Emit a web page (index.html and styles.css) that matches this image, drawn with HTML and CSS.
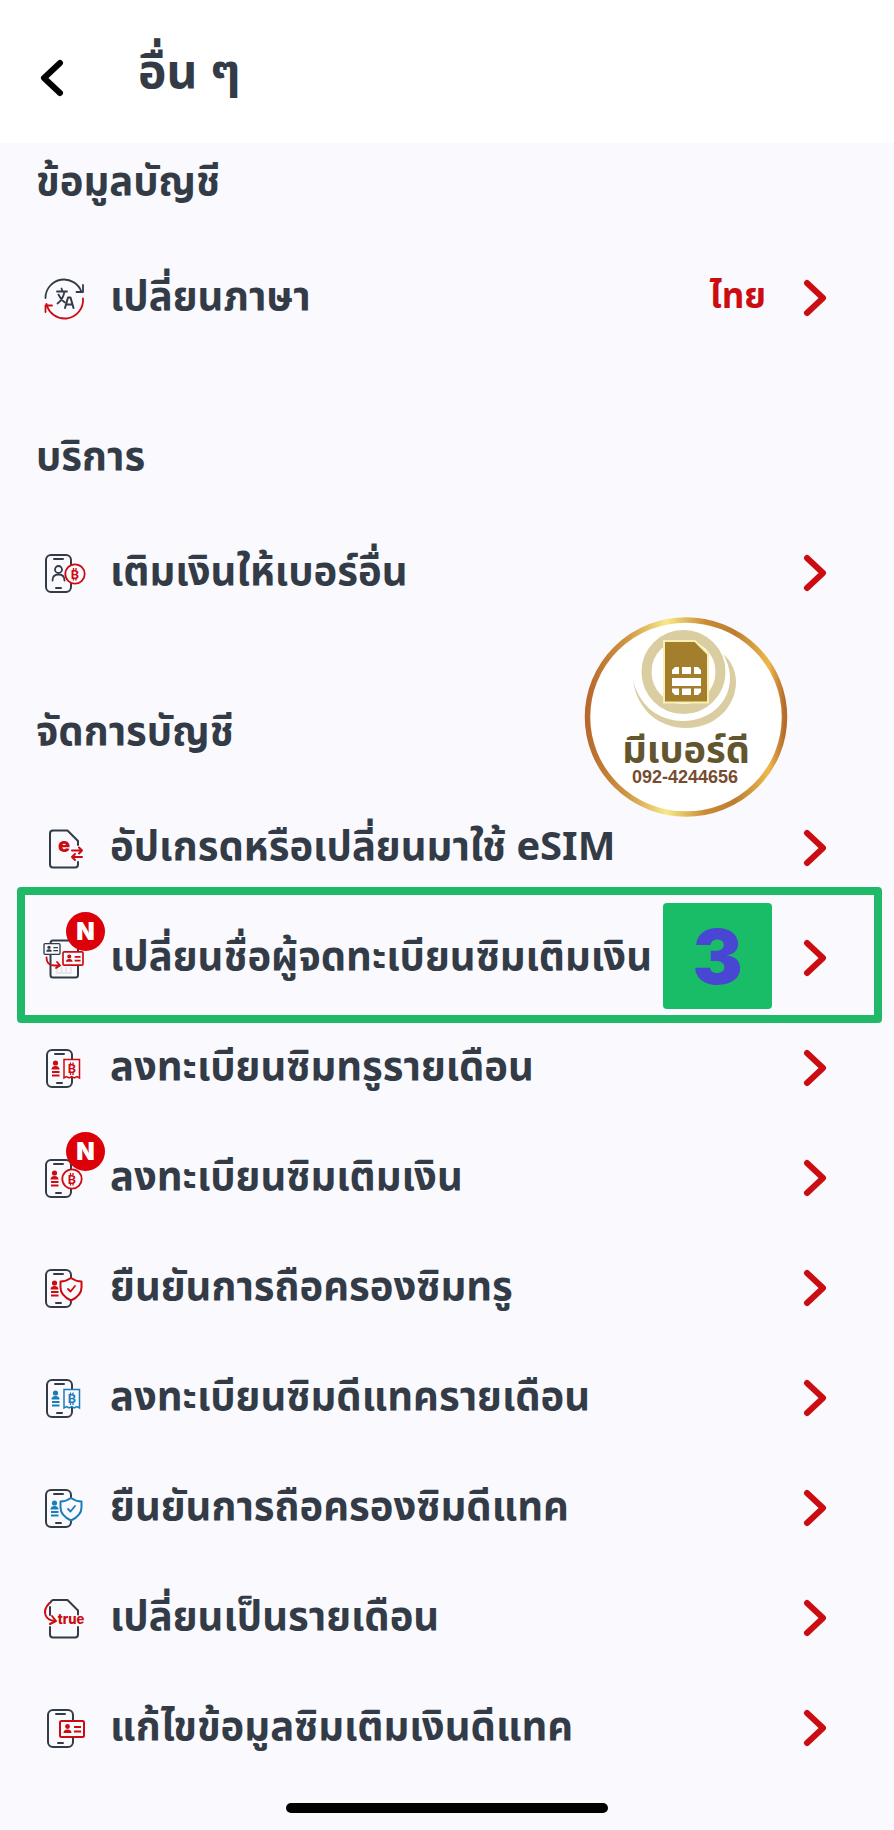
FILE: index.html
```html
<!DOCTYPE html>
<html lang="th">
<head>
<meta charset="utf-8">
<meta name="viewport" content="width=device-width, initial-scale=1">
<title>อื่น ๆ</title>
<link rel="stylesheet" href="styles.css">
</head>
<body>
<svg class="defs" aria-hidden="true">
  <symbol id="chevron" viewBox="0 0 24 38"><path d="M4 4L20 19L4 34" fill="none" stroke="currentColor" stroke-width="6" stroke-linecap="round" stroke-linejoin="round"/></symbol>
  <symbol id="phone" viewBox="0 0 48 48">
    <rect x="6" y="6" width="25" height="37" rx="5" fill="none" stroke="#333c46" stroke-width="2"/>
    <path d="M14 10h9M16 39h5" stroke="#333c46" stroke-width="2" stroke-linecap="round"/>
  </symbol>
  <symbol id="person" viewBox="0 0 48 48">
    <circle cx="14.500" cy="19" r="2.600" fill="currentColor"/>
    <path d="M10.500 25.500q0-3.500 4-3.500t4 3.500z" fill="currentColor"/>
    <path d="M11 28h7.500M11 31.500h7.500" stroke="currentColor" stroke-width="2"/>
  </symbol>
  <symbol id="bill" viewBox="0 0 48 48">
    <path d="M24 15.500h15.500v18.500l-2.600-1.500l-2.600 1.500l-2.600-1.500l-2.600 1.500l-2.600-1.500l-2.500 1.500z" fill="#f9f9fe" stroke="currentColor" stroke-width="1.500"/>
    <path d="M30.500 18.500v2M33 18.500v2M30.500 29v2M33 29v2" stroke="currentColor" stroke-width="1.300"/>
  </symbol>
  <symbol id="coin" viewBox="0 0 48 48">
    <circle cx="32" cy="25" r="9.700" fill="#f9f9fe" stroke="currentColor" stroke-width="1.800"/>
    <path d="M30.500 19v2M33 19v2M30.500 29.500v2M33 29.500v2" stroke="currentColor" stroke-width="1.300"/>
  </symbol>
  <symbol id="shield" viewBox="0 0 48 48">
    <path d="M31 14q5 3.500 10.500 3.500v6q0 8-10.500 13q-10.500-5-10.500-13v-6q5.500 0 10.500-3.500z" fill="#f9f9fe" stroke="currentColor" stroke-width="2" stroke-linejoin="round"/>
    <path d="M28 25l2.500 2.500l4.500-5.500" fill="none" stroke="currentColor" stroke-width="1.800" stroke-linecap="round" stroke-linejoin="round"/>
  </symbol>
  <symbol id="card" viewBox="0 0 26 18">
    <rect x="1" y="1" width="24" height="16" rx="1.500" fill="#f9f9fe" stroke="currentColor" stroke-width="2"/>
    <circle cx="8.500" cy="6.500" r="2.400" fill="currentColor"/>
    <path d="M4.500 13q0-3.500 4-3.500t4 3.500z" fill="currentColor"/>
    <path d="M15 7h7M15 11.500h7" stroke="currentColor" stroke-width="2"/>
  </symbol>
</svg>

<header class="topbar">
  <button class="back" type="button" aria-label="ย้อนกลับ"><svg class="chevron flip"><use href="#chevron"/></svg></button>
  <h1 class="title">อื่น ๆ</h1>
</header>

<main class="content">
  <section class="group">
    <h2 class="heading">ข้อมูลบัญชี</h2>
    <a class="row" href="#language">
      <svg class="icon" viewBox="0 0 48 48" fill="none" stroke-width="1.800" stroke-linecap="round" stroke-linejoin="round">
        <path d="M5.500 24a18.500 18.500 0 0 1 36-6M43 11v7h-6.500" stroke="#333c46"/>
        <path d="M43 24.500a18.500 18.500 0 0 1-36.500 5.500M5.500 38v-6.500h6.500" stroke="#cb0c11"/>
        <path d="M17 17.500h10M21.500 14.500l1 3M24.500 17.500q-1.500 8-7 12M18.500 20.500q3 6 6.500 8" stroke="#333c46"/>
        <path d="M25 34l3-10.500h2.500l3 10.500M26 30.500h6.500" stroke="#333c46" stroke-width="2"/>
      </svg>
      <span class="label">เปลี่ยนภาษา</span>
      <span class="value">ไทย</span>
      <svg class="chevron"><use href="#chevron"/></svg>
    </a>
  </section>

  <section class="group">
    <h2 class="heading">บริการ</h2>
    <a class="row" href="#topup">
      <svg class="icon" viewBox="0 0 48 48">
        <use href="#phone"/>
        <circle cx="18.500" cy="20.500" r="3.500" fill="none" stroke="#333c46" stroke-width="1.800"/>
        <path d="M12.500 31.500q0-6 6-6t6 6" fill="none" stroke="#333c46" stroke-width="1.800" stroke-linecap="round"/>
        <use href="#coin" x="3"/><text x="35" y="30" class="baht">B</text>
      </svg>
      <span class="label">เติมเงินให้เบอร์อื่น</span>
      <svg class="chevron"><use href="#chevron"/></svg>
    </a>
  </section>

  <section class="group">
    <h2 class="heading">จัดการบัญชี</h2>
    <a class="row" href="#esim">
      <svg class="icon" viewBox="0 0 48 48" fill="none" stroke-width="2" stroke-linecap="round" stroke-linejoin="round">
        <path d="M38 38v2.500q0 3-3 3h-22q-3 0-3-3v-31q0-3 3-3h14.500l10.500 10.500v4" stroke="#333c46"/>
        <path d="M32 26.500h10M39 23.500l3 3l-3 3M42 33h-10M35 30l-3 3l3 3" stroke="currentColor"/>
        <text x="24" y="28" class="mark-e">e</text>
      </svg>
      <span class="label">อัปเกรดหรือเปลี่ยนมาใช้ eSIM</span>
      <svg class="chevron"><use href="#chevron"/></svg>
    </a>
    <a class="row marked" href="#owner">
      <span class="icon-wrap">
        <svg class="icon" viewBox="0 0 48 48">
          <rect x="10.500" y="6.500" width="27.500" height="37" rx="2.500" fill="none" stroke="#333c46" stroke-width="2"/>
          <path d="M17 33v6h14v-6M21.500 33v6M26 33v6" fill="none" stroke="#dfdfe5" stroke-width="1.500"/>
          <use href="#card" x="3" y="9" width="18" height="12" color="#333c46"/>
          <use href="#card" x="22" y="17" width="22" height="15"/>
          <path d="M6.500 23.500q0 8 8 8h5M17 28l3 3.500l-4 2.500" fill="none" stroke="currentColor" stroke-width="1.800" stroke-linecap="round"/>
        </svg>
        <span class="new">N</span>
      </span>
      <span class="label">เปลี่ยนชื่อผู้จดทะเบียนซิมเติมเงิน</span>
      <span class="step">3</span>
      <svg class="chevron"><use href="#chevron"/></svg>
    </a>
    <a class="row" href="#true-monthly">
      <svg class="icon" viewBox="0 0 48 48"><use href="#phone" x="1"/><use href="#person" x="1"/><use href="#bill"/><text x="32" y="29" class="baht">B</text></svg>
      <span class="label">ลงทะเบียนซิมทรูรายเดือน</span>
      <svg class="chevron"><use href="#chevron"/></svg>
    </a>
    <a class="row" href="#prepaid">
      <span class="icon-wrap">
        <svg class="icon" viewBox="0 0 48 48"><use href="#phone"/><use href="#person"/><use href="#coin"/><text x="32" y="30" class="baht">B</text></svg>
        <span class="new">N</span>
      </span>
      <span class="label">ลงทะเบียนซิมเติมเงิน</span>
      <svg class="chevron"><use href="#chevron"/></svg>
    </a>
    <a class="row" href="#true-verify">
      <svg class="icon" viewBox="0 0 48 48"><use href="#phone"/><use href="#person"/><use href="#shield"/></svg>
      <span class="label">ยืนยันการถือครองซิมทรู</span>
      <svg class="chevron"><use href="#chevron"/></svg>
    </a>
    <a class="row" href="#dtac-monthly">
      <svg class="icon blue" viewBox="0 0 48 48"><use href="#phone" x="1"/><use href="#person" x="1"/><use href="#bill"/><text x="32" y="29" class="baht">B</text></svg>
      <span class="label">ลงทะเบียนซิมดีแทครายเดือน</span>
      <svg class="chevron"><use href="#chevron"/></svg>
    </a>
    <a class="row" href="#dtac-verify">
      <svg class="icon blue" viewBox="0 0 48 48"><use href="#phone"/><use href="#person"/><use href="#shield"/></svg>
      <span class="label">ยืนยันการถือครองซิมดีแทค</span>
      <svg class="chevron"><use href="#chevron"/></svg>
    </a>
    <a class="row" href="#to-monthly">
      <svg class="icon" viewBox="0 0 48 48" fill="none" stroke-width="2" stroke-linecap="round" stroke-linejoin="round">
        <path d="M10.500 8.500q1-2.500 3-2.500h14l10.500 10.500v4M38 33v7.500q0 3-3 3h-22q-3 0-3-3v-7.500M10 13v8" stroke="#333c46"/>
        <path d="M9.500 9q-6 6-4 12q2 5.500 9.500 6M12 22l4 5l-6 3" stroke="currentColor"/>
        <text x="31" y="30" class="mark-true">true</text>
      </svg>
      <span class="label">เปลี่ยนเป็นรายเดือน</span>
      <svg class="chevron"><use href="#chevron"/></svg>
    </a>
    <a class="row" href="#dtac-edit">
      <svg class="icon" viewBox="0 0 48 48"><use href="#phone" x="2"/><use href="#card" x="19" y="16" width="26" height="18"/></svg>
      <span class="label">แก้ไขข้อมูลซิมเติมเงินดีแทค</span>
      <svg class="chevron"><use href="#chevron"/></svg>
    </a>

    <svg class="seal" viewBox="0 0 204 202" role="img" aria-label="มีเบอร์ดี 092-4244656">
      <defs>
        <linearGradient id="rim" x1="0" y1="0" x2="1" y2="0">
          <stop offset="0" stop-color="#b8692b"/><stop offset=".2" stop-color="#cf9642"/><stop offset=".4" stop-color="#f7e98b"/><stop offset=".6" stop-color="#c98b35"/><stop offset=".75" stop-color="#bd7d31"/><stop offset=".92" stop-color="#edb84b"/><stop offset="1" stop-color="#b56c2b"/>
        </linearGradient>
      </defs>
      <ellipse cx="102" cy="101" rx="98.500" ry="97" fill="#fff" stroke="url(#rim)" stroke-width="5.500"/>
      <circle cx="99.500" cy="56" r="37" fill="none" stroke="#d9cda1" stroke-width="10"/>
      <path d="M49 64C53 95 76 112 102 112C132 112 152 90 152 66C152 53 146 44 139 38C144 46 146 55 146 62C146 88 124 105 99 105C74 105 55 89 49 64z" fill="#d9cda1"/>
      <path d="M80 25h31l13 13v48.500h-44z" fill="#a27e2d" stroke="#f9efb0" stroke-width="2"/>
      <path d="M91 51h4v7h-7v-4zM98 51h9v7h-9zM110 51h4l3 3v4h-7zM88 62h29v8h-29zM88 72.500h7v6.500h-4l-3-3zM98 72.500h9v6.500h-9zM110 72.500h7v3.500l-3 3h-4z" fill="#fff"/>
      <text x="102" y="147" class="seal-name">มีเบอร์ดี</text>
      <text x="101" y="167" class="seal-phone">092-4244656</text>
    </svg>
  </section>
</main>
<footer class="home"><span class="home-bar"></span></footer>
</body>
</html>
```
FILE: styles.css
```css
* { box-sizing: border-box; }
body {
  margin: 0;
  background: #f9f9fe;
  color: #333c46;
  font-family: "Noto Sans Thai", "Noto Sans", "Open Sans", sans-serif;
  font-weight: 700;
}
.defs { position: absolute; width: 0; height: 0; }
.topbar {
  display: flex;
  align-items: center;
  gap: 74px;
  height: 143px;
  padding: 12px 40px 0;
  background: #fff;
}
.back { display: flex; padding: 0; border: 0; background: none; color: #000; }
.title { margin: 0; padding-bottom: 8px; font-size: 48px; line-height: 64px; }
.chevron { flex: none; width: 24px; height: 38px; color: #cb0c11; }
.flip { transform: scaleX(-1); color: #000; }
.content { display: flex; flex-direction: column; gap: 65px; }
.group { position: relative; }
.heading { height: 100px; margin: 0; padding: 10px 36px 0; font-size: 40px; line-height: 60px; }
.row {
  position: relative;
  display: flex;
  align-items: center;
  height: 110px;
  padding: 0 67px 0 40px;
  color: inherit;
  text-decoration: none;
}
.icon { display: block; flex: none; width: 48px; height: 48px; color: #cb0c11; }
.blue { color: #1b7cba; }
.icon-wrap { position: relative; flex: none; }
.label { flex: 1; padding-left: 22px; font-size: 40px; line-height: 60px; white-space: nowrap; }
.value { margin-right: 37px; color: #cb0c11; font-size: 35px; line-height: 60px; }
.new {
  position: absolute;
  left: 26px;
  top: -22px;
  width: 39px;
  height: 39px;
  border-radius: 50%;
  background: #dc0008;
  color: #fff;
  font: 900 24px/39px Inter, sans-serif;
  text-align: center;
}
.marked::after {
  content: "";
  position: absolute;
  inset: -16px 12px -10px 17px;
  border: 8px solid #1fb968;
  border-radius: 4px;
}
.step {
  flex: none;
  width: 109px;
  height: 106px;
  margin: 0 31px 4px 0;
  border-radius: 4px;
  background: #19bc67;
  color: #4846d2;
  font: 900 75px/108px Inter, sans-serif;
  text-align: center;
}
.baht { fill: currentColor; font: 700 13px Roboto, sans-serif; text-anchor: middle; }
.mark-e { fill: currentColor; font: 900 20px Inter, sans-serif; text-anchor: middle; }
.mark-true { fill: currentColor; font: 800 13px Inter, sans-serif; text-anchor: middle; }
.seal { position: absolute; top: -77px; right: 106px; width: 204px; height: 202px; }
.seal-name { fill: #63552e; font-size: 38px; text-anchor: middle; }
.seal-phone { fill: #784c30; font: 700 18px "Liberation Sans", sans-serif; text-anchor: middle; }
.home { display: flex; justify-content: center; padding: 20px 0 17px; }
.home-bar { width: 36%; height: 10px; border-radius: 5px; background: #000; }
```
